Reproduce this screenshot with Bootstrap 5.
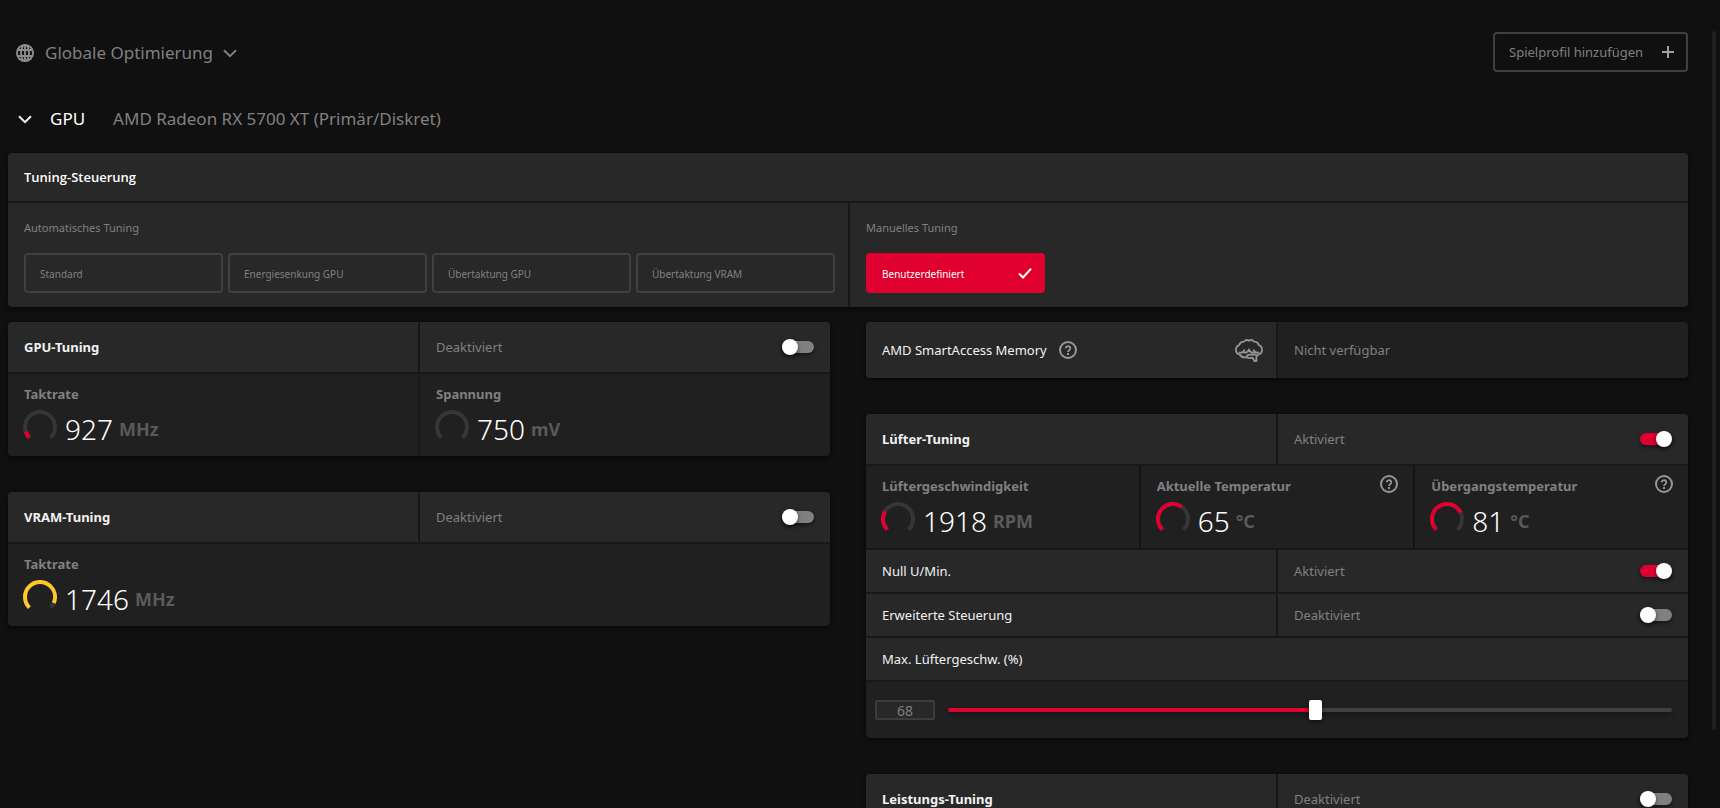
<!DOCTYPE html>
<html lang="de" data-bs-theme="dark">
<head>
<meta charset="utf-8">
<meta name="viewport" content="width=device-width, initial-scale=1">
<title>Leistungsoptimierung</title>
<link href="https://cdn.jsdelivr.net/npm/bootstrap@5.3.0/dist/css/bootstrap.min.css" rel="stylesheet">
<style>
  :root { --page: #101010; --head: #282828; --cell: #202020; --line: #181818; --edge: #404040; --accent: #e0002f; --dim: #808080; }
  body { background: var(--page); color: #f2f2f2; font-family: "Noto Sans", "Open Sans", sans-serif; font-size: 13px; line-height: 20px; }
  .app { height: 100vh; }
  .app-main { padding: 32px 0 0 8px; }
  .rail { width: 8px; margin-left: 24px; padding-top: 31px; }
  .rail-thumb { width: 4px; height: 90%; background: #202020; border-radius: 2px; }
  .plain { background: none; border: 0; padding: 0; color: inherit; text-align: left; }
  .dim { color: var(--dim); }
  .title-text { font-size: 17px; line-height: 24px; }
  .topbar { height: 40px; padding-left: 7px; }
  .profile-btn { gap: 10px; padding-top: 2px; }
  .gpu-row { height: 26px; margin: 34px 0 21px; padding-left: 10px; }
  .gpu-name { margin: 0 28px 0 18px; }
  .outline-btn { height: 40px; border: 2px solid var(--edge); border-radius: 4px; background: none; color: var(--dim); padding: 0 14px; text-align: left; }
  .add-btn { width: 195px; padding-right: 12px; }
  .panel { background: var(--line); border-radius: 4px; overflow: hidden; box-shadow: 0 2px 5px rgba(0,0,0,.6); display: grid; gap: 2px; }
  .split { display: grid; grid-template-columns: 1fr 1fr; gap: 2px; }
  .thirds { display: grid; grid-template-columns: 1fr 1fr 1fr; gap: 2px; background: #141414; }
  .cell-head { background: var(--head); padding: 0 16px; height: 50px; display: flex; align-items: center; }
  .cell-row { height: 42px; }
  .cell-48 { height: 48px; }
  .cell-56 { height: 56px; }
  .cell-dark { background: var(--cell); }
  .panel-title { font-family: "Open Sans", "Noto Sans", sans-serif; font-size: 13px; font-weight: 600; line-height: 20px; margin: 0; color: #fff; }
  .modes { display: grid; grid-template-columns: 1fr 1fr; background: var(--head); height: 104px; }
  .modes > div { padding: 15px 13px 14px 16px; }
  .modes > div + div { border-left: 2px solid var(--line); }
  .modes h3 { font-size: 11px; line-height: 20px; font-weight: 400; margin: 0 0 15px; color: var(--dim); }
  .mode-btn { font-size: 10px; flex: 1 1 0; padding-top: 2px; }
  .mode-on { width: 179px; height: 40px; border: 0; border-radius: 4px; background: var(--accent); color: #fff; font-size: 10px; padding: 2px 13px 0 16px; }
  .mode-list { gap: 5px; }
  .tuning { display: grid; grid-template-columns: 1fr 1fr; column-gap: 36px; margin-top: 15px; align-items: start; }
  .stack { display: grid; gap: 36px; }
  .stat { background: var(--cell); height: 82px; padding: 10px 16px 0; }
  .stat-top { height: 20px; margin-right: -1px; }
  .stat-name { font-weight: 700; color: var(--dim); }
  .stat-line { margin-left: -1px; margin-top: 6px; gap: 8px; }
  .stat-value { font-size: 28px; line-height: 38px; font-weight: 350; color: #fff; }
  .stat-unit { font-size: 18px; line-height: 38px; font-weight: 700; color: #5a5a5a; margin-left: -2px; }
  .gauge { width: 34px; height: 34px; fill: none; stroke-width: 4; }
  .gauge .base { stroke: #363636; }
  .gauge .fill-red { stroke: var(--accent); }
  .gauge .fill-gold { stroke: #ffc72c; }
  .help { color: #969696; line-height: 0; height: 18px; }
  .stat .help { margin-top: -1px; }
  .memory { padding-right: 13px; }
  .switch { appearance: none; position: relative; width: 32px; height: 16px; margin: 0 0 0 auto; cursor: pointer; }
  .switch::before { content: ""; position: absolute; inset: 2px 0; border-radius: 6px; background: #808080; box-shadow: 0 2px 4px rgba(0,0,0,.5); }
  .switch::after { content: ""; position: absolute; left: 0; top: 0; width: 16px; height: 16px; border-radius: 50%; background: #fff; box-shadow: 0 2px 4px rgba(0,0,0,.5); }
  .switch:checked::before { background: var(--accent); }
  .switch:checked::after { left: auto; right: 0; }
  .fan { gap: 13px; padding-left: 9px; }
  .fan-value { width: 60px; height: 20px; border: 2px solid #3c3c3c; border-radius: 2px; background: var(--head); color: var(--dim); font-size: 14px; text-align: center; padding: 0; line-height: 16px; }
  .fan-range { appearance: none; flex: 1; min-width: 0; height: 20px; margin: 0; background: none; }
  .fan-range::-webkit-slider-runnable-track { height: 4px; border-radius: 2px; background: linear-gradient(to right, var(--accent) var(--pos), #404040 var(--pos)); box-shadow: 0 3px 5px rgba(0,0,0,.4); }
  .fan-range::-webkit-slider-thumb { appearance: none; width: 13px; height: 20px; margin-top: -8px; border-radius: 2px; background: #fff; box-shadow: 0 2px 4px rgba(0,0,0,.5); }
</style>
</head>
<body>
<svg width="0" height="0" class="position-absolute" aria-hidden="true">
  <symbol id="i-help" viewBox="0 0 18 18"><circle cx="9" cy="9" r="8" fill="none" stroke="currentColor" stroke-width="2"/><path d="M6.7 7.3a2.3 2.2 0 1 1 3.6 1.8c-.8.6-1.3 1-1.3 1.9" fill="none" stroke="currentColor" stroke-width="1.8"/><rect x="8" y="12" width="2" height="2" fill="currentColor"/></symbol>
  <symbol id="i-down" viewBox="0 0 14 9"><path d="M1 1.2l6 6 6-6" fill="none" stroke="currentColor" stroke-width="2"/></symbol>
</svg>
<div class="app d-flex overflow-hidden">
  <main class="app-main flex-grow-1">
    <header class="topbar d-flex align-items-center justify-content-between">
      <button type="button" class="plain profile-btn d-flex align-items-center dim">
        <svg width="20" height="20" viewBox="0 0 20 20" fill="none" stroke="#8c8c8c" stroke-width="1.9"><circle cx="10" cy="10" r="8.1"/><ellipse cx="10" cy="10" rx="4" ry="8.1"/><path d="M10 2v16M2.500 7h15M2.500 13h15"/></svg>
        <span class="title-text">Globale Optimierung</span>
        <svg width="14" height="9"><use href="#i-down"/></svg>
      </button>
      <button type="button" class="outline-btn add-btn d-flex align-items-center justify-content-between">Spielprofil hinzufügen
        <svg width="12" height="12" stroke="#a0a0a0" stroke-width="2"><path d="M6 0v12M0 6h12"/></svg>
      </button>
    </header>

    <button type="button" class="plain gpu-row d-flex align-items-center">
      <svg width="14" height="9"><use href="#i-down"/></svg>
      <span class="title-text gpu-name text-white">GPU</span>
      <span class="title-text dim">AMD Radeon RX 5700 XT (Primär/Diskret)</span>
    </button>

    <section class="panel">
      <div class="cell-head cell-48"><h2 class="panel-title">Tuning-Steuerung</h2></div>
      <div class="modes">
        <div>
          <h3>Automatisches Tuning</h3>
          <div class="mode-list d-flex">
            <button type="button" class="outline-btn mode-btn">Standard</button>
            <button type="button" class="outline-btn mode-btn">Energiesenkung GPU</button>
            <button type="button" class="outline-btn mode-btn">Übertaktung GPU</button>
            <button type="button" class="outline-btn mode-btn">Übertaktung VRAM</button>
          </div>
        </div>
        <div>
          <h3>Manuelles Tuning</h3>
          <button type="button" class="mode-on d-flex align-items-center justify-content-between">Benutzerdefiniert
            <svg width="14" height="12" fill="none" stroke="#fff" stroke-width="2"><path d="M1 5.500l4 4L13 .8"/></svg>
          </button>
        </div>
      </div>
    </section>

    <div class="tuning">
      <div class="stack">
        <section class="panel">
          <div class="split">
            <label for="sw-gpu" class="cell-head fw-bold">GPU-Tuning</label>
            <div class="cell-head dim">Deaktiviert<input id="sw-gpu" class="switch" type="checkbox" role="switch"></div>
          </div>
          <div class="split">
            <div class="stat">
              <div class="stat-name">Taktrate</div>
              <div class="stat-line d-flex">
                <svg class="gauge" viewBox="0 0 34 34"><path class="base" d="M6.4 27.6A15 15 0 1 1 27.6 27.6"/><path class="fill-red" pathLength="100" stroke-dasharray="10 100" d="M6.4 27.6A15 15 0 1 1 27.6 27.6"/></svg>
                <span class="stat-value">927</span><span class="stat-unit">MHz</span>
              </div>
            </div>
            <div class="stat">
              <div class="stat-name">Spannung</div>
              <div class="stat-line d-flex">
                <svg class="gauge" viewBox="0 0 34 34"><path class="base" d="M6.4 27.6A15 15 0 1 1 27.6 27.6"/></svg>
                <span class="stat-value">750</span><span class="stat-unit">mV</span>
              </div>
            </div>
          </div>
        </section>

        <section class="panel">
          <div class="split">
            <label for="sw-vram" class="cell-head fw-bold">VRAM-Tuning</label>
            <div class="cell-head dim">Deaktiviert<input id="sw-vram" class="switch" type="checkbox" role="switch"></div>
          </div>
          <div class="stat">
            <div class="stat-name">Taktrate</div>
            <div class="stat-line d-flex">
              <svg class="gauge" viewBox="0 0 34 34"><path class="base" d="M6.4 27.6A15 15 0 1 1 27.6 27.6"/><path class="fill-gold" pathLength="100" stroke-dasharray="92 100" d="M6.4 27.6A15 15 0 1 1 27.6 27.6"/></svg>
              <span class="stat-value">1746</span><span class="stat-unit">MHz</span>
            </div>
          </div>
        </section>
      </div>

      <div class="stack">
        <section class="panel">
          <div class="split">
            <div class="cell-head cell-56 memory">AMD SmartAccess Memory
              <button type="button" class="plain help ms-2 ps-1" aria-label="Hilfe"><svg width="18" height="18"><use href="#i-help"/></svg></button>
              <svg class="ms-auto" width="28" height="23" viewBox="0 0 28 23" fill="none" stroke="#969696" stroke-width="1.8" stroke-linejoin="round" stroke-linecap="round"><path d="M4.800 15.500C2.400 15.200 1 13.200 1 10.800 1 8.400 2.400 6.500 4.400 5.800 5 3.800 6.800 2.700 8.800 2.700 10.200 1 12.400.7 14 1.700c1.600-1 3.800-.7 5.200 1 2 0 3.800 1.100 4.400 3.100 2 .7 3.400 2.600 3.400 5s-1.400 4.400-3.800 4.700c-.4 1-1 1.500-1.800 1.700V22h-2l-1.800-3.400c-2.400.7-4.600.4-5.800-.4-2.600.6-5.600 0-7-2.700z"/><path d="M4.500 13.500c2 .5 4-.3 4.800-2.300M8 13c1.500 1 5.500.6 6-2.500.5 3.100 4.500 3.500 6 2.500M23.500 13.500c-2 .5-4-.3-4.800-2.300M11.500 18c.5-1.800 2-2.500 4-2.300h5.500"/></svg>
            </div>
            <div class="cell-head cell-56 cell-dark dim">Nicht verfügbar</div>
          </div>
        </section>

        <section class="panel">
          <div class="split">
            <label for="sw-fan" class="cell-head fw-bold">Lüfter-Tuning</label>
            <div class="cell-head dim">Aktiviert<input id="sw-fan" class="switch" type="checkbox" role="switch" checked></div>
          </div>
          <div class="thirds">
            <div class="stat">
              <div class="stat-name">Lüftergeschwindigkeit</div>
              <div class="stat-line d-flex">
                <svg class="gauge" viewBox="0 0 34 34"><path class="base" d="M6.4 27.6A15 15 0 1 1 27.6 27.6"/><path class="fill-red" pathLength="100" stroke-dasharray="28 100" d="M6.4 27.6A15 15 0 1 1 27.6 27.6"/></svg>
                <span class="stat-value">1918</span><span class="stat-unit">RPM</span>
              </div>
            </div>
            <div class="stat">
              <div class="stat-top d-flex align-items-start justify-content-between">
                <span class="stat-name">Aktuelle Temperatur</span>
                <button type="button" class="plain help" aria-label="Hilfe"><svg width="18" height="18"><use href="#i-help"/></svg></button>
              </div>
              <div class="stat-line d-flex">
                <svg class="gauge" viewBox="0 0 34 34"><path class="base" d="M6.4 27.6A15 15 0 1 1 27.6 27.6"/><path class="fill-red" pathLength="100" stroke-dasharray="63 100" d="M6.4 27.6A15 15 0 1 1 27.6 27.6"/></svg>
                <span class="stat-value">65</span><span class="stat-unit">°C</span>
              </div>
            </div>
            <div class="stat">
              <div class="stat-top d-flex align-items-start justify-content-between">
                <span class="stat-name">Übergangstemperatur</span>
                <button type="button" class="plain help" aria-label="Hilfe"><svg width="18" height="18"><use href="#i-help"/></svg></button>
              </div>
              <div class="stat-line d-flex">
                <svg class="gauge" viewBox="0 0 34 34"><path class="base" d="M6.4 27.6A15 15 0 1 1 27.6 27.6"/><path class="fill-red" pathLength="100" stroke-dasharray="74 100" d="M6.4 27.6A15 15 0 1 1 27.6 27.6"/></svg>
                <span class="stat-value">81</span><span class="stat-unit">°C</span>
              </div>
            </div>
          </div>
          <div class="split">
            <label for="sw-zero" class="cell-head cell-row">Null U/Min.</label>
            <div class="cell-head cell-row dim">Aktiviert<input id="sw-zero" class="switch" type="checkbox" role="switch" checked></div>
          </div>
          <div class="split">
            <label for="sw-adv" class="cell-head cell-row">Erweiterte Steuerung</label>
            <div class="cell-head cell-row dim">Deaktiviert<input id="sw-adv" class="switch" type="checkbox" role="switch"></div>
          </div>
          <label for="fan-max" class="cell-head cell-row">Max. Lüftergeschw. (%)</label>
          <div class="cell-head cell-56 cell-dark fan">
            <input class="fan-value" type="text" value="68" aria-label="Max. Lüftergeschw. in Prozent">
            <input id="fan-max" class="fan-range" type="range" min="35" max="100" value="68" style="--pos: 51%">
          </div>
        </section>

        <section class="panel">
          <div class="split">
            <label for="sw-power" class="cell-head fw-bold">Leistungs-Tuning</label>
            <div class="cell-head dim">Deaktiviert<input id="sw-power" class="switch" type="checkbox" role="switch"></div>
          </div>
        </section>
      </div>
    </div>
  </main>
  <div class="rail" aria-hidden="true"><div class="rail-thumb"></div></div>
</div>
<script src="https://cdn.jsdelivr.net/npm/bootstrap@5.3.0/dist/js/bootstrap.bundle.min.js"></script>
</body>
</html>
